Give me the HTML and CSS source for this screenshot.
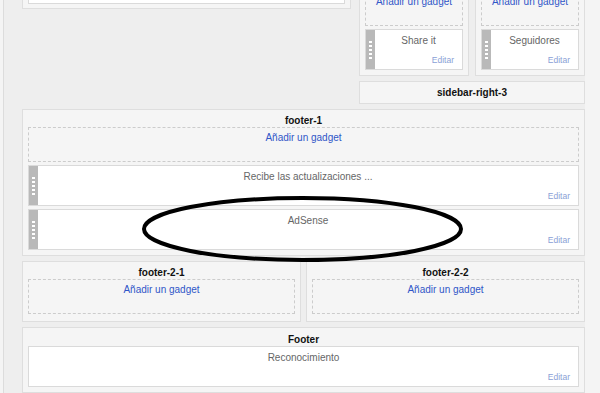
FILE: index.html
```html
<!DOCTYPE html>
<html lang="es">
<head>
  <meta charset="UTF-8" />
  <meta name="viewport" content="width=device-width, initial-scale=1.0" />
  <title>Diseño</title>
  <link rel="stylesheet" href="styles.css">
</head>
<body>
  <div class="page">
    <div class="columns">
      <div class="main">
        <div class="section main-box">
          <div class="gadget plain"></div>
        </div>
      </div>

      <div class="sidebar">
        <div class="sidebar-pair">
          <div class="section">
            <div class="section-title">sidebar-right-1</div>
            <div class="add-gadget"><a href="#">Añadir un gadget</a></div>
            <div class="gadget">
              <div class="handle"></div>
              <div class="gadget-body">
                <span class="gadget-title">Share it</span>
                <a class="edit" href="#">Editar</a>
              </div>
            </div>
          </div>
          <div class="section">
            <div class="section-title">sidebar-right-2</div>
            <div class="add-gadget"><a href="#">Añadir un gadget</a></div>
            <div class="gadget">
              <div class="handle"></div>
              <div class="gadget-body">
                <span class="gadget-title">Seguidores</span>
                <a class="edit" href="#">Editar</a>
              </div>
            </div>
          </div>
        </div>
        <div class="section compact">
          <div class="section-title">sidebar-right-3</div>
        </div>
      </div>
    </div>

    <div class="section">
      <div class="section-title">footer-1</div>
      <div class="add-gadget"><a href="#">Añadir un gadget</a></div>
      <div class="gadget">
        <div class="handle"></div>
        <div class="gadget-body">
          <span class="gadget-title">Recibe las actualizaciones ...</span>
          <a class="edit" href="#">Editar</a>
        </div>
      </div>
      <div class="gadget">
        <div class="handle"></div>
        <div class="gadget-body">
          <span class="gadget-title">AdSense</span>
          <a class="edit" href="#">Editar</a>
        </div>
      </div>
    </div>

    <div class="footer-pair">
      <div class="section tall">
        <div class="section-title">footer-2-1</div>
        <div class="add-gadget"><a href="#">Añadir un gadget</a></div>
      </div>
      <div class="section tall">
        <div class="section-title">footer-2-2</div>
        <div class="add-gadget"><a href="#">Añadir un gadget</a></div>
      </div>
    </div>

    <div class="section footer">
      <div class="section-title">Footer</div>
      <div class="gadget">
        <div class="gadget-body">
          <span class="gadget-title">Reconocimiento</span>
          <a class="edit" href="#">Editar</a>
        </div>
      </div>
    </div>
  </div>

  <!-- hand-drawn mark around the AdSense gadget -->
  <svg class="mark" width="600" height="393" viewBox="0 0 600 393">
    <ellipse cx="302.5" cy="229" rx="158.5" ry="31" fill="none" stroke="#000" stroke-width="4" />
  </svg>
</body>
</html>
```

FILE: styles.css
```css
* {
  margin: 0;
  padding: 0;
  box-sizing: border-box;
}
html, body {
  width: 100%;
  height: 100%;
  overflow: hidden;
}
body {
  background: #f4f4f4;
  font-family: 'Liberation Sans', Arial, sans-serif;
  font-size: 10px;
  color: #222;
  position: relative;
}

.page {
  margin-left: 3px;
  min-height: 100%;
  background: #eeeeee;
  border-left: 1px solid #dcdcdc;
  padding: 0 0 0 18px;
  width: 582px;
  display: flex;
  flex-direction: column;
  gap: 5px;
  margin-top: -27px;
}

a {
  text-decoration: none;
}

.columns {
  display: flex;
  gap: 8px;
}
.main {
  width: 329px;
}
.sidebar {
  width: 226px;
  display: flex;
  flex-direction: column;
  gap: 5px;
}
.sidebar-pair {
  display: flex;
  gap: 6px;
}
.sidebar-pair .section {
  width: 110px;
}
.footer-pair {
  display: flex;
  gap: 5px;
}
.footer-pair .section {
  flex: 1;
}

.section {
  background: #f5f5f5;
  border: 1px solid #dedede;
  padding: 0 5px 5px;
}
.section.compact {
  height: 23px;
  padding: 0 5px;
}
.section.tall {
  padding-bottom: 7px;
}
.section-title {
  font-weight: bold;
  text-align: center;
  color: #111;
  padding-top: 4px;
  line-height: 13px;
}
.footer .section-title {
  padding-top: 5px;
  line-height: 13px;
}
.footer .gadget {
  margin-top: 0;
}

.main-box {
  height: 36px;
  padding: 0 5px 4px;
}
.main-box .gadget {
  height: 30px;
  margin-top: 0;
}

.add-gadget {
  height: 35px;
  border: 1px dashed #cccccc;
  text-align: center;
  padding-top: 3px;
  line-height: 13px;
}
.add-gadget a {
  color: #3056c8;
}

.gadget {
  display: flex;
  height: 41px;
  margin-top: 3px;
  background: #fff;
  border: 1px solid #dadada;
}
.handle {
  width: 9px;
  background: #b9b9b9;
}
.handle::before {
  content: '';
  display: block;
  width: 3px;
  height: 18px;
  margin: 11px 0 0 3px;
  background: repeating-linear-gradient(to bottom, #fff 0 2px, transparent 2px 4px);
}
.gadget-body {
  flex: 1;
  display: flex;
  flex-direction: column;
  justify-content: space-between;
  padding: 4px 8px 4px;
}
.gadget-title {
  text-align: center;
  color: #666;
  line-height: 13px;
}
.edit {
  align-self: flex-end;
  color: #8a9fd6;
  font-size: 8.5px;
  line-height: 10px;
}

.mark {
  position: absolute;
  left: 0;
  top: 0;
  pointer-events: none;
}
```
